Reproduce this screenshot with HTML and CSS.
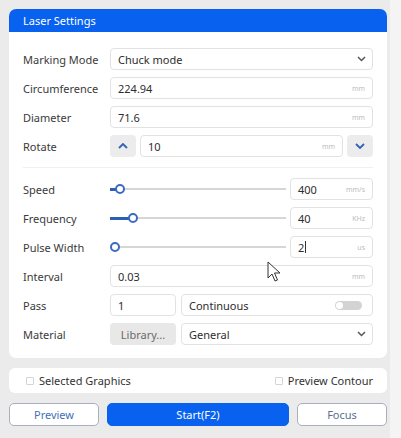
FILE: index.html
```html
<!DOCTYPE html>
<html lang="en">
<head>
<meta charset="UTF-8">
<meta name="viewport" content="width=device-width, initial-scale=1.0">
<title>Laser Settings</title>
<link rel="stylesheet" href="styles.css">
</head>
<body>

<div class="app">
  <div class="panel">
    <div class="panel-head">Laser Settings</div>
    <div class="panel-body">

      <div class="row">
        <div class="label">Marking Mode</div>
        <div class="field select">Chuck mode
          <svg class="chev" width="9" height="6" viewBox="0 0 9 6"><path d="M1 1l3.5 3.5 3.5-3.5" fill="none" stroke="#555" stroke-width="1.5"/></svg>
        </div>
      </div>
      <div class="row">
        <div class="label">Circumference</div>
        <div class="field">224.94<span class="unit">mm</span></div>
      </div>
      <div class="row">
        <div class="label">Diameter</div>
        <div class="field">71.6<span class="unit">mm</span></div>
      </div>
      <div class="row">
        <div class="label">Rotate</div>
        <div class="split">
          <button class="step"><svg width="10" height="6" viewBox="0 0 10 6"><path d="M1 5l4-4 4 4" fill="none" stroke="#2f63b8" stroke-width="1.8"/></svg></button>
          <div class="field grow">10<span class="unit">mm</span></div>
          <button class="step"><svg width="10" height="6" viewBox="0 0 10 6"><path d="M1 1l4 4 4-4" fill="none" stroke="#2f63b8" stroke-width="1.8"/></svg></button>
        </div>
      </div>

      <div class="sep"></div>

      <div class="row">
        <div class="label">Speed</div>
        <div class="split">
          <div class="slider"><div class="fill" style="width: 10px"></div><div class="knob" style="left: 10px"></div></div>
          <div class="field num">400<span class="unit">mm/s</span></div>
        </div>
      </div>
      <div class="row">
        <div class="label">Frequency</div>
        <div class="split">
          <div class="slider"><div class="fill" style="width: 23px"></div><div class="knob" style="left: 23px"></div></div>
          <div class="field num">40<span class="unit">KHz</span></div>
        </div>
      </div>
      <div class="row">
        <div class="label">Pulse Width</div>
        <div class="split">
          <div class="slider"><div class="knob" style="left: 5px"></div></div>
          <div class="field num">2<span class="caret"></span><span class="unit">us</span></div>
        </div>
      </div>
      <div class="row">
        <div class="label">Interval</div>
        <div class="field">0.03<span class="unit">mm</span></div>
      </div>
      <div class="row">
        <div class="label">Pass</div>
        <div class="split wide">
          <div class="field small">1</div>
          <div class="field grow">Continuous<span class="toggle"><span class="dot"></span></span></div>
        </div>
      </div>
      <div class="row">
        <div class="label">Material</div>
        <div class="split wide">
          <button class="lib">Library...</button>
          <div class="field grow select">General
            <svg class="chev" width="9" height="6" viewBox="0 0 9 6"><path d="M1 1l3.5 3.5 3.5-3.5" fill="none" stroke="#555" stroke-width="1.5"/></svg>
          </div>
        </div>
      </div>

    </div>
  </div>

  <div class="options">
    <label class="check"><span class="box"></span>Selected Graphics</label>
    <label class="check"><span class="box"></span>Preview Contour</label>
  </div>

  <div class="actions">
    <button class="btn">Preview</button>
    <button class="btn primary">Start(F2)</button>
    <button class="btn focus">Focus</button>
  </div>

  <svg class="cursor" width="14" height="21" viewBox="0 0 14 21"><path d="M1 1v16l4-4 3 7 2.5-1-3-7h5.5z" fill="#fff" stroke="#333" stroke-width="1"/></svg>
</div>

</body>
</html>
```

FILE: styles.css
```css
body {
  margin: 0;
  padding: 0;
  background-color: #f4f4f4;
  font-family: 'Noto Sans', sans-serif;
  font-size: 11px;
  color: #3a3a3a;
}

.app {
  position: relative;
  width: 378px;
  height: 438px;
  padding: 9px 3px 0 9px;
  background-color: #ebebeb;
}

.panel {
  background-color: #fff;
  border-radius: 7px;
}

.panel-head {
  height: 23px;
  line-height: 23px;
  padding-left: 14px;
  background-color: #0862ef;
  color: #fff;
  border-radius: 7px 7px 0 0;
}

.panel-body {
  padding: 16px 14px 13px 14px;
  display: flex;
  flex-direction: column;
  gap: 7px;
}

.row {
  display: flex;
  align-items: center;
  height: 22px;
}

.label {
  width: 87px;
  flex-shrink: 0;
}

.field {
  position: relative;
  flex: 1;
  height: 22px;
  line-height: 21px;
  box-sizing: border-box;
  border: 1px solid #e2e2e2;
  border-radius: 4px;
  padding-left: 7px;
  background-color: #fff;
  display: flex;
  align-items: center;
  color: #2e2e2e;
}

.unit {
  margin-left: auto;
  margin-right: 7px;
  font-size: 7px;
  color: #bcbcbc;
}

.select .chev {
  margin-left: auto;
  margin-right: 6px;
}

.split {
  flex: 1;
  display: flex;
  align-items: center;
  gap: 4px;
}

.split.wide {
  gap: 5px;
}

.grow {
  flex: 1;
}

.step {
  width: 26px;
  height: 22px;
  border: none;
  border-radius: 4px;
  background-color: #ececec;
  display: flex;
  align-items: center;
  justify-content: center;
  padding: 0;
}

.sep {
  height: 1px;
  background-color: #f0f0f0;
  margin: 3px 0;
}

.slider {
  position: relative;
  flex: 1;
  height: 2px;
  background-color: #d6d6d6;
}

.fill {
  position: absolute;
  left: 0;
  top: -0.5px;
  height: 3px;
  background-color: #2c5fb3;
}

.knob {
  position: absolute;
  top: -4px;
  width: 6px;
  height: 6px;
  margin-left: -5px;
  border: 2px solid #3a6bc0;
  border-radius: 50%;
  background-color: #fff;
}

.num {
  flex: 0 0 83px;
}

.caret {
  width: 1px;
  height: 12px;
  margin-left: 1px;
  background-color: #333;
}

.small {
  flex: 0 0 66px;
}

.toggle {
  position: relative;
  margin-left: auto;
  margin-right: 10px;
  width: 27px;
  height: 9px;
  border-radius: 5px;
  background-color: #d3d3d3;
}

.toggle .dot {
  position: absolute;
  left: 1px;
  top: 1px;
  width: 7px;
  height: 7px;
  border-radius: 50%;
  background-color: #fff;
}

.lib {
  flex: 0 0 66px;
  height: 22px;
  border: none;
  border-radius: 4px;
  background-color: #e8e8e8;
  color: #6a6a6a;
  font-family: 'Noto Sans', sans-serif;
  font-size: 11px;
  padding: 0;
}

.options {
  margin-top: 10px;
  height: 25px;
  background-color: #fff;
  border-radius: 6px;
  display: flex;
  align-items: center;
  justify-content: space-between;
  padding: 0 14px 0 17px;
}

.check {
  display: flex;
  align-items: center;
  gap: 5px;
  color: #333;
}

.box {
  width: 6px;
  height: 6px;
  border: 1px solid #d4d4d4;
  border-radius: 1px;
}

.actions {
  margin-top: 10px;
  display: flex;
  gap: 7px;
}

.btn {
  flex: 0 0 90px;
  height: 23px;
  border: 1px solid #a9b0bb;
  border-radius: 5px;
  background-color: #fff;
  color: #4670b4;
  font-family: 'Noto Sans', sans-serif;
  font-size: 11px;
  padding: 0;
}

.btn.focus {
  color: #5a6f90;
}

.btn.primary {
  flex: 1;
  margin: 0 1px;
  border-color: #0862ef;
  background-color: #0862ef;
  color: #fff;
}

.cursor {
  position: absolute;
  left: 267px;
  top: 261px;
}
```
